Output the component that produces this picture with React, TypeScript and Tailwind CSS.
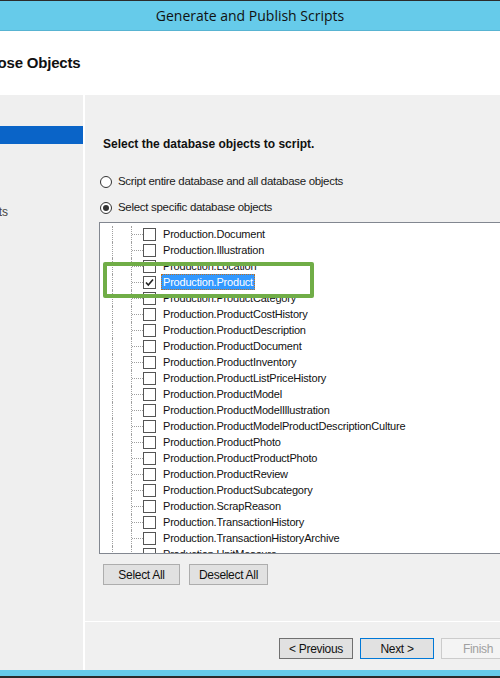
const rows = [
  "Production.Document",
  "Production.Illustration",
  "Production.Location",
  "Production.Product",
  "Production.ProductCategory",
  "Production.ProductCostHistory",
  "Production.ProductDescription",
  "Production.ProductDocument",
  "Production.ProductInventory",
  "Production.ProductListPriceHistory",
  "Production.ProductModel",
  "Production.ProductModelIllustration",
  "Production.ProductModelProductDescriptionCulture",
  "Production.ProductPhoto",
  "Production.ProductProductPhoto",
  "Production.ProductReview",
  "Production.ProductSubcategory",
  "Production.ScrapReason",
  "Production.TransactionHistory",
  "Production.TransactionHistoryArchive",
  "Production.UnitMeasure",
];

const steps = [
  "Introduction",
  "Choose Objects",
  "Set Scripting Options",
  "Summary",
  "Save or Publish Scripts",
];

function Radio({ checked, label }: { checked?: boolean; label: string }) {
  return (
    <div className="flex h-[16px] items-center gap-[6px] pl-[1px]">
      <span className="flex h-[12px] w-[12px] items-center justify-center rounded-full border border-[#333] bg-white">
        {checked && <span className="h-[6px] w-[6px] rounded-full bg-[#333]" />}
      </span>
      <span className="text-[11.5px] tracking-[-0.3px] text-[#1a1a1a]">{label}</span>
    </div>
  );
}

function Row({ name, checked }: { name: string; checked?: boolean }) {
  return (
    <div className="flex h-[16px] shrink-0 items-stretch">
      <div className="w-[12px] shrink-0" />
      <div className="w-[1px] shrink-0 border-l border-dotted border-[#a0a0a0]" />
      <div className="w-[18px] shrink-0" />
      <div className="w-[1px] shrink-0 border-l border-dotted border-[#a0a0a0]" />
      <div className="flex w-[11px] shrink-0 items-center">
        <div className="w-full border-t border-dotted border-[#a0a0a0]" />
      </div>
      <div className="flex items-center">
        <span className="flex h-[13px] w-[13px] items-center justify-center border border-[#555] bg-white">
          {checked && (
            <svg width="9" height="9" viewBox="0 0 9 9">
              <path d="M1 4.5 L3.3 7 L8 1.5" fill="none" stroke="#222" strokeWidth="1.6" />
            </svg>
          )}
        </span>
      </div>
      <div className="flex items-center pl-[5px]">
        {checked ? (
          <span className="border border-dotted border-[#c07020] bg-[#3399ff] px-[1px] leading-[14px] text-white">
            {name}
          </span>
        ) : (
          <span className="px-[2px] leading-[14px] text-[#111]">{name}</span>
        )}
      </div>
    </div>
  );
}

export default function App() {
  return (
    <div className="flex h-[678px] w-[500px] flex-col overflow-hidden bg-[#f0f0f0] font-['Liberation_Sans',Arial,sans-serif]">
      <div className="flex h-[31px] shrink-0 items-center justify-center border-t border-b border-t-[#2b2b2b] border-b-[#58b4d2] bg-[#66cbea]">
        <span className="font-['Open_Sans',sans-serif] text-[14px] text-[#111]">
          Generate and Publish Scripts
        </span>
      </div>

      <div className="flex h-[64px] shrink-0 items-center overflow-hidden bg-white">
        <span className="-ml-[31px] whitespace-nowrap text-[15px] font-bold tracking-[-0.2px] text-[#111]">
          Choose Objects
        </span>
      </div>

      <div className="flex min-h-0 flex-1">
        <div className="flex w-[83px] shrink-0 flex-col overflow-hidden bg-[#efefef] pt-[4px]">
          {steps.map((s, i) => (
            <div
              key={s}
              className={
                i === 1
                  ? "flex h-[18px] shrink-0 items-center bg-[#0a64c8] text-[12px] text-white"
                  : "flex h-[27px] shrink-0 items-center text-[12px] text-[#444]"
              }
            >
              <span className="-ml-[116px] whitespace-nowrap">{s}</span>
            </div>
          ))}
        </div>
        <div className="w-[2px] shrink-0 bg-white" />

        <div className="flex min-w-0 flex-1 flex-col overflow-hidden">
          <div className="flex h-[526px] shrink-0 flex-col pl-[14px] pt-[41px]">
            <div className="pl-[4px] text-[12px] font-bold leading-[16px] text-[#111]">
              Select the database objects to script.
            </div>
            <div className="mt-[22px]">
              <Radio label="Script entire database and all database objects" />
            </div>
            <div className="mt-[10px]">
              <Radio checked label="Select specific database objects" />
            </div>

            <div className="relative mt-[6px] flex h-[332px] w-[440px] shrink-0 flex-col overflow-hidden border border-[#828790] bg-white pt-[3px] text-[11px] tracking-[-0.2px]">
              {rows.map((r) => (
                <Row key={r} name={r} checked={r === "Production.Product"} />
              ))}
              <div className="absolute left-[3px] top-[39px] h-[36px] w-[211px] rounded-[2px] border-[4px] border-[#70ad47]" />
            </div>

            <div className="mt-[10px] flex gap-[9px] pl-[4px] text-[12px] tracking-[-0.3px] text-[#111]">
              <button className="h-[21px] w-[77px] border border-[#adadad] bg-[#e1e1e1]">Select All</button>
              <button className="h-[21px] w-[79px] border border-[#adadad] bg-[#e1e1e1]">Deselect All</button>
            </div>
          </div>

          <div className="h-[1px] shrink-0 bg-white" />

          <div className="flex flex-1 items-start gap-[7px] pl-[194px] pt-[16px] text-[12px] tracking-[-0.3px]">
            <button className="h-[21px] w-[74px] shrink-0 border border-[#707070] bg-[#e1e1e1] text-[#111]">&lt; Previous</button>
            <button className="h-[21px] w-[74px] shrink-0 border border-[#0078d7] bg-[#e1e1e1] text-[#111]">Next &gt;</button>
            <button className="h-[21px] w-[74px] shrink-0 border border-[#cccccc] bg-[#f4f4f4] text-[#a0a0a0]">Finish</button>
          </div>
        </div>
      </div>

      <div className="h-[6px] shrink-0 bg-[#66cbea]" />
      <div className="h-[2px] shrink-0 bg-[#2b2b2b]" />
    </div>
  );
}
